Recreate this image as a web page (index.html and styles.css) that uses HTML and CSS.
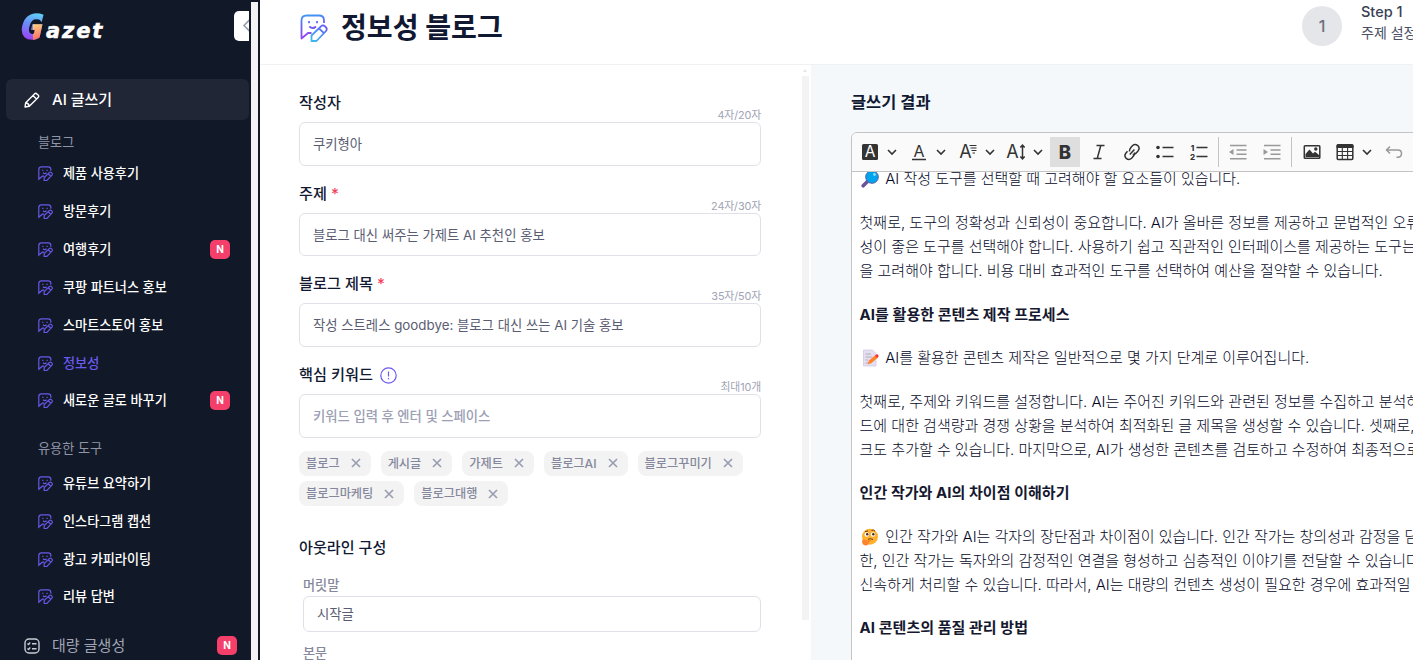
FILE: index.html
```html
<!DOCTYPE html>
<html lang="ko">
<head>
	<meta charset="utf-8">
	<title>Gazet - 정보성 블로그</title>
	<meta name="viewport" content="width=device-width,initial-scale=1">
	<link rel="stylesheet" href="styles.css">
</head>
<body>

	<!-- shared icons -->
	<svg class="defs" width="0" height="0">
		<defs>
			<linearGradient id="brand" x1="4" y1="0" x2="8" y2="26" gradientUnits="userSpaceOnUse">
				<stop offset="0" stop-color="#3aa0f5"/>
				<stop offset=".5" stop-color="#6b5cf5"/>
				<stop offset="1" stop-color="#a03ff5"/>
			</linearGradient>
			<linearGradient id="brand2" x1="26" y1="11" x2="12" y2="27" gradientUnits="userSpaceOnUse">
				<stop offset="0" stop-color="#6a4df5"/>
				<stop offset=".5" stop-color="#4b8ef5"/>
				<stop offset="1" stop-color="#3fb8f0"/>
			</linearGradient>
			<symbol id="smile" viewBox="0 0 28 28">
				<path d="M11.500 19H8L1.500 24.500V6.500Q1.500 1.500 6.500 1.500H19Q24 1.500 24 6.500V9"/>
				<path d="M11.500 27V21.500L21 12.300Q23 10.500 25 12.300L26 13.300Q27.500 15 26 17L16.500 27ZM19 14.500L24 19.200"/>
				<path d="M9.300 12.500Q12.700 15.600 16 12.500M9 7V9.200M17 7V9.200"/>
			</symbol>
			<symbol id="chev" viewBox="0 0 10 10">
				<path d="M1 3L5 7L9 3"/>
			</symbol>
		</defs>
	</svg>

	<div class="container">
		<div class="sidebar">
			<div class="logo"><span class="logo-g">G</span><span class="logo-text">azet</span></div>
			<div class="fold"><svg width="16" height="30" viewBox="0 0 16 30"><path d="M16 8.500L10 14.500L16 20.500"/></svg></div>

			<div class="menu-top active">
				<svg class="pen" width="16" height="16" viewBox="0 0 16 16"><path d="M1 15L1.700 10.700L10.500 1.900Q11.700 .7 12.900 1.900L14.100 3.100Q15.300 4.300 14.100 5.500L5.300 14.300ZM8.900 3.500L12.500 7.100M1.700 10.700Q4.800 11 5.300 14.300"/></svg>
				AI 글쓰기
			</div>

			<h4 class="cate">블로그</h4>
			<ul class="list">
				<li><svg class="ico"><use href="#smile"/></svg>제품 사용후기</li>
				<li><svg class="ico"><use href="#smile"/></svg>방문후기</li>
				<li><svg class="ico"><use href="#smile"/></svg>여행후기<span class="new">N</span></li>
				<li><svg class="ico"><use href="#smile"/></svg>쿠팡 파트너스 홍보</li>
				<li><svg class="ico"><use href="#smile"/></svg>스마트스토어 홍보</li>
				<li class="on"><svg class="ico"><use href="#smile"/></svg>정보성</li>
				<li><svg class="ico"><use href="#smile"/></svg>새로운 글로 바꾸기<span class="new">N</span></li>
			</ul>

			<h4 class="cate cate-tool">유용한 도구</h4>
			<ul class="list">
				<li><svg class="ico"><use href="#smile"/></svg>유튜브 요약하기</li>
				<li><svg class="ico"><use href="#smile"/></svg>인스타그램 캡션</li>
				<li><svg class="ico"><use href="#smile"/></svg>광고 카피라이팅</li>
				<li><svg class="ico"><use href="#smile"/></svg>리뷰 답변</li>
			</ul>

			<div class="menu-top bulk">
				<svg class="pen" width="16" height="16" viewBox="0 0 16 16"><rect x="1" y="1" width="14" height="14" rx="4"/><path d="M3.500 5.500L4.500 6.500L6.300 4.500M3.500 10.500L4.500 11.500L6.300 9.500M8 5.700H12.500M8 10.700H12.500"/></svg>
				대량 글생성<span class="new">N</span>
			</div>
		</div>
		<div class="side-scroll"></div>

		<div class="main">
			<div class="header">
				<svg class="title-ico" width="28" height="28" viewBox="0 0 28 28">
					<g stroke="url(#brand)">
						<path d="M11.500 19H8L1.500 24.500V6.500Q1.500 1.500 6.500 1.500H19Q24 1.500 24 6.500V9"/>
						<path d="M9.300 12.500Q12.700 15.600 16 12.500M9 7V9.200M17 7V9.200"/>
					</g>
					<path stroke="url(#brand2)" d="M11.500 27V21.500L21 12.300Q23 10.500 25 12.300L26 13.300Q27.500 15 26 17L16.500 27ZM19 14.500L24 19.200"/>
				</svg>
				<h1>정보성 블로그</h1>
				<div class="step">
					<span class="step-num">1</span>
					<div class="step-text"><b>Step 1</b><p>주제 설정</p></div>
				</div>
			</div>

			<div class="content">
				<div class="form">
					<div class="field">
						<div class="label"><span>작성자</span><em>4자/20자</em></div>
						<div class="input">쿠키형아</div>
					</div>
					<div class="field">
						<div class="label"><span>주제 <i>*</i></span><em>24자/30자</em></div>
						<div class="input">블로그 대신 써주는 가제트 AI 추천인 홍보</div>
					</div>
					<div class="field">
						<div class="label"><span>블로그 제목 <i>*</i></span><em>35자/50자</em></div>
						<div class="input">작성 스트레스 goodbye: 블로그 대신 쓰는 AI 기술 홍보</div>
					</div>
					<div class="field">
						<div class="label"><span>핵심 키워드</span><svg class="info" width="17" height="17" viewBox="0 0 17 17"><circle cx="8.500" cy="8.500" r="7.700"/><path d="M8.500 4.500V9.500M8.500 11V12.300"/></svg><em>최대10개</em></div>
						<div class="input holder">키워드 입력 후 엔터 및 스페이스</div>
					</div>
					<div class="tags">
						<span>블로그<svg><path d="M1 1L9 9M9 1L1 9"/></svg></span>
						<span>게시글<svg><path d="M1 1L9 9M9 1L1 9"/></svg></span>
						<span>가제트<svg><path d="M1 1L9 9M9 1L1 9"/></svg></span>
						<span>블로그AI<svg><path d="M1 1L9 9M9 1L1 9"/></svg></span>
						<span>블로그꾸미기<svg><path d="M1 1L9 9M9 1L1 9"/></svg></span>
						<span>블로그마케팅<svg><path d="M1 1L9 9M9 1L1 9"/></svg></span>
						<span>블로그대행<svg><path d="M1 1L9 9M9 1L1 9"/></svg></span>
					</div>
					<h3>아웃라인 구성</h3>
					<div class="outline">
						<p>머릿말</p>
						<div class="input">시작글</div>
						<p>본문</p>
					</div>
				</div>
				<div class="form-scroll"></div>

				<div class="result">
					<h2>글쓰기 결과</h2>
					<div class="editor">
						<div class="toolbar">
							<span class="tool drop"><svg class="t" viewBox="0 0 20 20"><rect class="fill" x="2" y="2" width="16" height="16" rx="1.500"/><text class="inv" x="10" y="15.300" font-size="15.500">A</text></svg><svg class="chev"><use href="#chev"/></svg></span>
							<span class="tool drop"><svg class="t" viewBox="0 0 20 20"><text x="10" y="14.500" font-size="16">A</text><path d="M3 17.500H17"/></svg><svg class="chev"><use href="#chev"/></svg></span>
							<span class="tool drop"><svg class="t" viewBox="0 0 20 20"><text x="7.500" y="16" font-size="18">A</text><path class="thin" d="M11.500 3.500H18.500M12.500 6H18.500M13.500 8.500H18.500M14.500 11H17"/></svg><svg class="chev"><use href="#chev"/></svg></span>
							<span class="tool drop"><svg class="t" viewBox="0 0 20 20"><text x="6.500" y="16" font-size="18">A</text><path d="M16.500 4V16M14.300 5.500L16.500 3.200L18.700 5.500M14.300 14.500L16.500 16.800L18.700 14.500"/></svg><svg class="chev"><use href="#chev"/></svg></span>
							<span class="tool pressed"><svg class="t" viewBox="0 0 20 20"><text class="bold" x="10" y="16.500" font-size="18.500">B</text></svg></span>
							<span class="tool"><svg class="t" viewBox="0 0 20 20"><path d="M7.500 3.500H15.500M4.500 16.500H12.500M11.800 3.500L8.300 16.300"/></svg></span>
							<span class="tool"><svg class="t" viewBox="0 0 20 20"><path d="M7.400 9.500Q7.300 7.200 8.900 5.400L10.400 3.700Q13 1.300 15.800 3.600Q18.300 6.200 16 9L13.800 11.400Q12.300 12.700 10.700 12.600M12.600 10.500Q12.700 12.800 11.100 14.600L9.600 16.300Q7 18.700 4.200 16.400Q1.700 13.800 4 11L5.500 9.200M7.800 12.600L12.400 7.400"/></svg></span>
							<span class="tool"><svg class="t" viewBox="0 0 20 20"><circle class="fill" cx="3" cy="5.500" r="1.800"/><circle class="fill" cx="3" cy="14.500" r="1.800"/><path d="M7.500 5.500H18.500M7.500 14.500H18.500"/></svg></span>
							<span class="tool"><svg class="t" viewBox="0 0 20 20"><text class="bold" x="3.500" y="8.500" font-size="8">1</text><text class="bold" x="3.500" y="18" font-size="8">2</text><path d="M7.500 5.500H18.500M7.500 14.500H18.500"/></svg></span>
							<span class="sep"></span>
							<span class="tool off"><svg class="t" viewBox="0 0 20 20"><path d="M2 3.500H18.500M8.500 8H18.500M8.500 12.200H18.500M2 16.700H18.500"/><path class="fill" d="M1 10L5.500 7V13Z"/></svg></span>
							<span class="tool off"><svg class="t" viewBox="0 0 20 20"><path d="M2 3.500H18.500M8.500 8H18.500M8.500 12.200H18.500M2 16.700H18.500"/><path class="fill" d="M6 10L1.500 7V13Z"/></svg></span>
							<span class="sep"></span>
							<span class="tool"><svg class="t" viewBox="0 0 20 20"><rect x="2.300" y="3.800" width="15.500" height="12.500" rx=".8"/><path class="fill" d="M3.500 14V12L7.500 7.500L11 11.500L13 9.800L17 13V15H3.500Z"/><circle class="fill" cx="13.800" cy="7" r="1.700"/></svg></span>
							<span class="tool drop"><svg class="t" viewBox="0 0 20 20"><path class="fill" d="M1.500 3.500Q1.500 2 3 2H17Q18.500 2 18.500 3.500V6H1.500Z"/><rect x="2.200" y="3" width="15.600" height="14.500" rx="1"/><path class="thin" d="M2 9.500H18M2 13.500H18M7.300 6V17.500M12.600 6V17.500"/></svg><svg class="chev"><use href="#chev"/></svg></span>
							<span class="tool off"><svg class="t" viewBox="0 0 20 20"><path d="M6 4.500L2.500 8L6 11.500M2.500 8H14Q17.500 8 17.500 11.500T14 15.300H12.500"/></svg></span>
						</div>
						<div class="text">
							<p><svg class="emoji" viewBox="0 0 18 18"><path d="M2.200 15.800L7.500 10.500" stroke="#6b539c" stroke-width="3.600" stroke-linecap="round"/><circle cx="11" cy="7" r="6.300" fill="#00a6ed" stroke="#5b5f9e" stroke-width="1"/><circle cx="13.500" cy="4.500" r="1.400" fill="#8fdcff"/></svg> AI 작성 도구를 선택할 때 고려해야 할 요소들이 있습니다.</p>
							<p>첫째로, 도구의 정확성과 신뢰성이 중요합니다. AI가 올바른 정보를 제공하고 문법적인 오류<br>성이 좋은 도구를 선택해야 합니다. 사용하기 쉽고 직관적인 인터페이스를 제공하는 도구는<br>을 고려해야 합니다. 비용 대비 효과적인 도구를 선택하여 예산을 절약할 수 있습니다.</p>
							<p><b>AI를 활용한 콘텐츠 제작 프로세스</b></p>
							<p><svg class="emoji" viewBox="0 0 18 18"><path d="M2.500 1H11.500L15 4.500V17H2.500Z" fill="#e5dff0" stroke="#cfc6e0" stroke-width=".7"/><path d="M4.500 5H10M4.500 8H11M4.500 11H7M4.500 14H8" stroke="#b4acbc"/><path d="M6.500 15.300L8 11.500L14.200 6.300L16.500 9L10.300 14.200Z" fill="#ff822d"/><path d="M14 6.500L15.300 5.400Q16.300 4.900 17.100 5.800T17.300 8L16.200 9.100Z" fill="#f8312f"/></svg> AI를 활용한 콘텐츠 제작은 일반적으로 몇 가지 단계로 이루어집니다.</p>
							<p>첫째로, 주제와 키워드를 설정합니다. AI는 주어진 키워드와 관련된 정보를 수집하고 분석하<br>드에 대한 검색량과 경쟁 상황을 분석하여 최적화된 글 제목을 생성할 수 있습니다. 셋째로,<br>크도 추가할 수 있습니다. 마지막으로, AI가 생성한 콘텐츠를 검토하고 수정하여 최종적으로</p>
							<p><b>인간 작가와 AI의 차이점 이해하기</b></p>
							<p><svg class="emoji" viewBox="0 0 18 18"><circle cx="9" cy="8.700" r="8" fill="#ffb02e"/><circle cx="5.800" cy="6.500" r="2.200" fill="#fff"/><circle cx="12" cy="6.500" r="2.200" fill="#fff"/><circle cx="6.200" cy="6.200" r="1.200" fill="#402a32"/><circle cx="12.300" cy="6.200" r="1.200" fill="#402a32"/><path d="M4 3.500L7 3M10.500 2.500Q12.500 1.300 14 3M7 11.300Q9.500 10 12 11.500" stroke="#6b3a20" fill="none"/><path d="M1 13Q3 10 4.500 12.500L9.500 12Q11 13 9 13.800L7.500 14.500Q8 17.500 4.500 17.500Q1 17 1 13Z" fill="#ff822d"/></svg> 인간 작가와 AI는 각자의 장단점과 차이점이 있습니다. 인간 작가는 창의성과 감정을 담<br>한, 인간 작가는 독자와의 감정적인 연결을 형성하고 심층적인 이야기를 전달할 수 있습니다<br>신속하게 처리할 수 있습니다. 따라서, AI는 대량의 컨텐츠 생성이 필요한 경우에 효과적일</p>
							<p><b>AI 콘텐츠의 품질 관리 방법</b></p>
						</div>
					</div>
				</div>
			</div>
		</div>
	</div>

</body>
</html>
```
FILE: styles.css
```css
*{
	margin: 0;
	padding: 0;
	box-sizing: border-box;
}

ul{
	list-style: none
}
i, em{
	font-style: normal
}

body{
	height: 660px;
	overflow: hidden;
	background: #fff;
	color: #111832;
	font-family: "Inter", "Noto Sans CJK KR", sans-serif;
	font-size: 15px;
	line-height: 24px;
	white-space: nowrap;
}
svg{
	fill: none;
	flex-shrink: 0;
}
.defs{
	position: absolute;
}

.container{
	display: flex;
	height: 660px;
}

/* sidebar */
.sidebar{
	position: relative;
	width: 251px;
	flex-shrink: 0;
	background: #111827;
	color: #fff;
	font-size: 13.15px;
	font-weight: 500;
}
.logo{
	height: 79px;
	padding: 9px 0 0 21px;
	display: flex;
	font-family: "DejaVu Sans", sans-serif;
	font-weight: bold;
	font-style: italic;
}
.logo-g{
	width: 25px;
	height: 36px;
	font-family: "DejaVu Sans Mono", monospace;
	font-size: 34px;
	line-height: 36px;
	text-indent: 1px;
	background: linear-gradient(160deg, #ffd27a, #f5405f) 12px 15px / 13px 20px no-repeat, linear-gradient(195deg, #5fd2f5 15%, #6a8cf8 45%, #9a45f5 80%);
	-webkit-background-clip: text;
	background-clip: text;
	-webkit-text-stroke: 1.6px transparent;
	color: transparent;
	transform: scaleX(1.1);
}
.logo-text{
	font-size: 21px;
	line-height: 45px;
	letter-spacing: 1.9px;
	-webkit-text-stroke: .5px #fff;
}
.fold{
	position: absolute;
	left: 234px;
	top: 11px;
	width: 15px;
	height: 30px;
	overflow: hidden;
	background: #fff;
	border-radius: 5px 0 0 5px;
}
.fold svg{
	display: block;
	stroke: #9a9fb0;
	stroke-width: 1.6;
}
.menu-top{
	display: flex;
	align-items: center;
	height: 41px;
	margin: 0 2px 0 6px;
	padding-left: 18px;
	border-radius: 6px;
	font-size: 15px;
}
.active{
	background: #202636;
}
.pen{
	margin-right: 12px;
	stroke: #fff;
	stroke-width: 1.4;
	stroke-linejoin: round;
}
.bulk{
	margin-top: 10px;
	color: #a0a5b5;
	font-weight: 400;
}
.bulk .pen{
	stroke: #c8cbd5;
}
.bulk .new{
	margin-right: 12px;
}
.cate{
	height: 34.4px;
	padding: 10px 0 0 38px;
	font-size: 13.15px;
	font-weight: 400;
	color: #8f94a6;
}
.cate-tool{
	height: 44.6px;
	padding-top: 17px;
}
.list li{
	display: flex;
	align-items: center;
	height: 37.85px;
	padding: 0 21px 0 38px;
}
.list .on{
	color: #6a5af0;
}
.ico{
	width: 15px;
	height: 15px;
	margin: 1px 10px 0 0;
	stroke: #6a58e8;
	stroke-width: 2.2;
}
.new{
	width: 20px;
	height: 19px;
	margin-left: auto;
	border-radius: 5px;
	background: #f43f6b;
	color: #fff;
	font-size: 10px;
	font-weight: 700;
	line-height: 18px;
	text-align: center;
}
.side-scroll{
	width: 9px;
	flex-shrink: 0;
	background: #f3f3f3;
	border-top: 2px solid #111827;
	border-right: 2px solid #111827;
}

/* header */
.main{
	flex: 1;
	min-width: 0;
	overflow: hidden;
}
.header{
	display: flex;
	height: 65px;
	padding-left: 40px;
	border-bottom: 1px solid #f0f1f3;
}
.title-ico{
	margin-top: 14px;
	stroke-width: 1.8;
	stroke-linejoin: round;
}
.header h1{
	width: 961px;
	flex-shrink: 0;
	padding-left: 13px;
	font-size: 28.1px;
	line-height: 56px;
	font-weight: 700;
}
.step{
	display: flex;
	margin-left: 13px;
}
.step-num{
	width: 40px;
	height: 40px;
	margin-top: 6px;
	border-radius: 50%;
	background: #e5e6ea;
	color: #6b6f80;
	font-size: 16px;
	font-weight: 500;
	line-height: 40px;
	text-align: center;
}
.step-text{
	margin-left: 19px;
	padding-top: 1px;
	font-size: 14px;
	line-height: 22px;
	color: #4a4f65;
}
.step-text b{
	display: block;
	font-size: 14.5px;
	font-weight: 500;
	color: #3a3f55;
}
.step-text p{
	line-height: 20px;
}

/* form */
.content{
	display: flex;
	height: 595px;
}
.form{
	width: 542px;
	flex-shrink: 0;
	padding: 25px 41px 0 39px;
}
.field{
	margin-bottom: 15px;
}
.label{
	display: flex;
	height: 32px;
	font-weight: 500;
	font-size: 15.2px;
	line-height: 25px;
}
.label i{
	color: #f43f5e;
}
.label em{
	margin-left: auto;
	align-self: flex-end;
	font-size: 10.8px;
	letter-spacing: -.1px;
	line-height: 12px;
	font-weight: 400;
	color: #a0a4b5;
}
.info{
	margin: 5px 0 0 7px;
	stroke: #6a5af5;
	stroke-width: 1.2;
}
.input{
	height: 43.7px;
	padding-left: 13px;
	border: 1px solid #e0e0e9;
	border-radius: 6px;
	font-size: 13.35px;
	line-height: 42px;
	color: #5a5d72;
}
.holder{
	color: #9ca0b4;
	font-weight: 500;
}
.tags{
	display: flex;
	flex-wrap: wrap;
	gap: 5px 10px;
	margin-top: -2px;
}
.tags span{
	display: flex;
	align-items: center;
	height: 25.3px;
	padding: 1px 10px 0 7px;
	border-radius: 8px;
	background: #f3f3f3;
	font-size: 12.2px;
	font-weight: 500;
	color: #85889c;
}
.tags svg{
	width: 10px;
	height: 10px;
	margin: -1px 0 0 11px;
	stroke: #9a9eb2;
	stroke-width: 1.7;
}
.form h3{
	margin-top: 30px;
	font-size: 15.1px;
	font-weight: 500;
}
.outline{
	padding-left: 4px;
}
.outline p{
	height: 36px;
	padding-top: 13px;
	font-size: 13.15px;
	font-weight: 500;
	color: #85889c;
}
.outline .input{
	height: 36px;
	line-height: 34px;
}
.outline .input + p{
	padding-top: 9px;
}
.form-scroll{
	width: 7px;
	height: 544px;
	margin: 11px 2px 0 0;
	flex-shrink: 0;
	background: #f3f3f3;
}
.form-scroll::before{
	content: "";
	display: block;
	margin: -7px 0 0 1px;
	width: 0;
	border: 2.5px solid transparent;
	border-top: 0;
	border-bottom: 3px solid #e6e6e6;
}

/* result */
.result{
	flex: 1;
	min-width: 0;
	overflow: hidden;
	padding: 25px 0 0 40px;
	background: #f4f8fb;
}
.result h2{
	height: 42px;
	font-size: 16.4px;
	font-weight: 600;
	line-height: 25px;
}
.editor{
	width: 620px;
	height: 600px;
	border: 1px solid #c4c4c4;
	border-radius: 6px 0 0 0;
	background: #fff;
	overflow: hidden;
}
.toolbar{
	position: relative;
	z-index: 1;
	display: flex;
	align-items: center;
	gap: 3.4px;
	height: 39px;
	padding-left: 3px;
	border-bottom: 1px solid #c4c4c4;
	background: #fafafa;
}
.tool{
	display: flex;
	align-items: center;
	flex-shrink: 0;
	width: 30px;
	height: 30px;
	padding-left: 5px;
	stroke: #333;
	color: #333;
}
.drop{
	width: 45.4px;
}
.pressed{
	background: #dedede;
}
.off{
	stroke: #999;
	color: #999;
}
.t{
	width: 20px;
	height: 20px;
	stroke-width: 1.5;
}
.t .fill{
	fill: currentColor;
	stroke: none;
}
.t .thin{
	stroke-width: 1.1;
}
.t text{
	fill: currentColor;
	stroke: none;
	text-anchor: middle;
}
.t .inv{
	fill: #fff;
}
.t .bold{
	font-weight: 800;
}
.chev{
	width: 10px;
	height: 10px;
	margin-left: 7px;
	stroke-width: 1.6;
}
.sep{
	width: 1px;
	height: 30px;
	margin: 0 1px;
	background: #c4c4c4;
	flex-shrink: 0;
}
.text{
	padding-left: 7.6px;
	margin-top: -4.7px;
	color: #05071f;
	font-weight: 300;
	letter-spacing: -.02px;
}
.text p{
	margin-bottom: 19.6px;
}
.text b{
	color: #15182f;
	font-weight: 700;
	letter-spacing: .05px;
}
.emoji{
	width: 18px;
	height: 18px;
	margin: 0 2px 0 1.500px;
	vertical-align: -4px;
}
```
